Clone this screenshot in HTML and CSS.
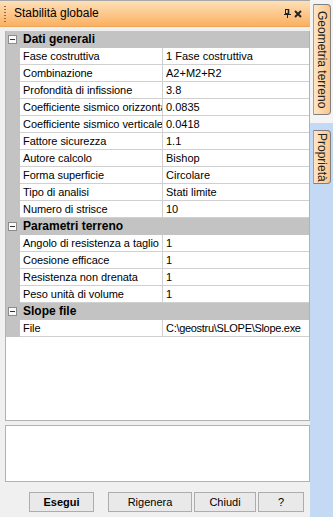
FILE: index.html
```html
<!DOCTYPE html>
<html lang="it">
<head>
    <meta charset="UTF-8">
    <meta name="viewport" content="width=device-width, initial-scale=1.0">
    <title>Stabilità globale</title>
    <link rel="stylesheet" href="styles.css">
</head>
<body>
    <!-- Pannello principale -->
    <div class="panel">
        <div class="title-bar">
            <span class="grip"></span>
            <span class="title">Stabilità globale</span>
            <span class="title-icons">
                <svg class="pin" width="7" height="9" viewBox="0 0 7 9">
                    <rect x="1.5" y="0.5" width="3" height="4" fill="none" stroke="#222" stroke-width="1"/>
                    <line x1="4.5" y1="0" x2="4.5" y2="5" stroke="#222" stroke-width="1.6"/>
                    <line x1="0" y1="5.5" x2="7" y2="5.5" stroke="#222" stroke-width="1"/>
                    <line x1="3.5" y1="5" x2="3.5" y2="9" stroke="#222" stroke-width="1"/>
                </svg>
                <svg class="close" width="8" height="8" viewBox="0 0 8 8">
                    <path d="M1 1 L7 7 M7 1 L1 7" stroke="#222" stroke-width="1.9"/>
                </svg>
            </span>
        </div>

        <div class="content">
            <!-- Griglia proprietà -->
            <div class="grid">
                <div class="section"><span class="toggle"></span>Dati generali</div>
                <div class="row"><span class="gutter"></span><span class="name">Fase costruttiva</span><span class="value">1 Fase costruttiva</span></div>
                <div class="row"><span class="gutter"></span><span class="name">Combinazione</span><span class="value">A2+M2+R2</span></div>
                <div class="row"><span class="gutter"></span><span class="name">Profondità di infissione</span><span class="value">3.8</span></div>
                <div class="row"><span class="gutter"></span><span class="name">Coefficiente sismico orizzontale</span><span class="value">0.0835</span></div>
                <div class="row"><span class="gutter"></span><span class="name">Coefficiente sismico verticale</span><span class="value">0.0418</span></div>
                <div class="row"><span class="gutter"></span><span class="name">Fattore sicurezza</span><span class="value">1.1</span></div>
                <div class="row"><span class="gutter"></span><span class="name">Autore calcolo</span><span class="value">Bishop</span></div>
                <div class="row"><span class="gutter"></span><span class="name">Forma superficie</span><span class="value">Circolare</span></div>
                <div class="row"><span class="gutter"></span><span class="name">Tipo di analisi</span><span class="value">Stati limite</span></div>
                <div class="row"><span class="gutter"></span><span class="name">Numero di strisce</span><span class="value">10</span></div>

                <div class="section"><span class="toggle"></span>Parametri terreno</div>
                <div class="row"><span class="gutter"></span><span class="name">Angolo di resistenza a taglio</span><span class="value">1</span></div>
                <div class="row"><span class="gutter"></span><span class="name">Coesione efficace</span><span class="value">1</span></div>
                <div class="row"><span class="gutter"></span><span class="name">Resistenza non drenata</span><span class="value">1</span></div>
                <div class="row"><span class="gutter"></span><span class="name">Peso unità di volume</span><span class="value">1</span></div>

                <div class="section"><span class="toggle"></span>Slope file</div>
                <div class="row"><span class="gutter"></span><span class="name">File</span><span class="value value-path">C:\geostru\SLOPE\Slope.exe</span></div>
            </div>

            <!-- Descrizione -->
            <div class="description"></div>

            <!-- Pulsanti -->
            <div class="buttons">
                <button class="btn btn-run">Esegui</button>
                <button class="btn btn-regen">Rigenera</button>
                <button class="btn btn-close">Chiudi</button>
                <button class="btn btn-help">?</button>
            </div>
        </div>
    </div>

    <!-- Barra laterale con schede -->
    <div class="sidebar">
        <div class="tab-area">
            <div class="tab tab-geo">Geometria terreno</div>
        </div>
        <div class="tab tab-prop">Proprietà</div>
    </div>
</body>
</html>
```

FILE: styles.css
```css
/* Base */
* {
    margin: 0;
    padding: 0;
    box-sizing: border-box;
    font-family: 'Liberation Sans', Arial, sans-serif;
}

body {
    background: #f0f0f0;
    color: #000;
    display: flex;
    width: 333px;
    height: 517px;
    overflow: hidden;
}

/* Pannello */
.panel {
    width: 310px;
    display: flex;
    flex-direction: column;
}

.title-bar {
    height: 27px;
    border-top: 1px solid #a8a8a8;
    background: linear-gradient(#fee0b8, #fbb062);
    border-bottom: 1px solid #eaa558;
    display: flex;
    align-items: center;
    padding-left: 4px;
}

.grip {
    width: 2px;
    height: 16px;
    background: repeating-linear-gradient(#9b6a36 0 1px, transparent 1px 3px);
    margin-right: 8px;
}

.title {
    font-size: 12px;
    flex: 1;
    padding-bottom: 1px;
}

.title-icons {
    display: flex;
    align-items: center;
    padding-right: 8px;
}

.pin {
    margin-right: 3px;
}

.content {
    padding: 4px 0 0 5px;
}

/* Griglia */
.grid {
    height: 390px;
    border: 1px solid #b2b2b2;
    border-top: none;
    background: #fff;
    font-size: 11px;
}

.section {
    height: 17px;
    background: #c3c3c3;
    font-size: 12px;
    font-weight: bold;
    line-height: 17px;
    display: flex;
    align-items: center;
    padding-left: 2px;
}

.toggle {
    width: 9px;
    height: 9px;
    border: 1px solid #8c8c8c;
    background: #fafafa;
    margin-right: 6px;
    position: relative;
}

.toggle::after {
    content: '';
    position: absolute;
    left: 1px;
    top: 3px;
    width: 5px;
    height: 1px;
    background: #333;
}

.row {
    display: flex;
    height: 17px;
}

.gutter {
    width: 14px;
    background: #c3c3c3;
}

.name,
.value {
    height: 17px;
    line-height: 16px;
    border-bottom: 1px solid #d0d0d0;
    white-space: nowrap;
    overflow: hidden;
    padding-left: 3px;
}

.name {
    width: 143px;
    border-right: 1px solid #d0d0d0;
    letter-spacing: -0.06px;
}

.value {
    flex: 1;
}

.value-path {
    letter-spacing: -0.3px;
}

/* Descrizione */
.description {
    margin-top: 4px;
    height: 57px;
    border: 1px solid #b2b2b2;
    background: #fff;
}

/* Pulsanti */
.buttons {
    display: flex;
    margin-top: 10px;
    padding-left: 24px;
}

.btn {
    height: 20px;
    font-size: 11px;
    background: #e9e9e9;
    border: 1px solid #adadad;
    color: #000;
}

.btn-run {
    width: 65px;
    font-weight: bold;
    margin-right: 14px;
}

.btn-regen {
    width: 84px;
    margin-right: 2px;
}

.btn-close {
    width: 62px;
    margin-right: 2px;
}

.btn-help {
    width: 46px;
}

/* Barra laterale */
.sidebar {
    width: 23px;
    background: #c4d9f4;
}

.tab-area {
    background: #f4f4f4;
    height: 123px;
    padding: 4px 2px 0 3px;
}

.tab {
    writing-mode: vertical-rl;
    font-size: 12px;
    color: #222;
    width: 18px;
    border: 1px solid #7f7f7f;
    border-left-color: #a0a0a0;
    border-radius: 0 4px 4px 0;
    background: linear-gradient(90deg, #fee6c6, #fcc589);
    text-align: center;
    line-height: 16px;
}

.tab-geo {
    height: 111px;
}

.tab-prop {
    height: 54px;
    margin: 7px 0 0 3px;
}
```
